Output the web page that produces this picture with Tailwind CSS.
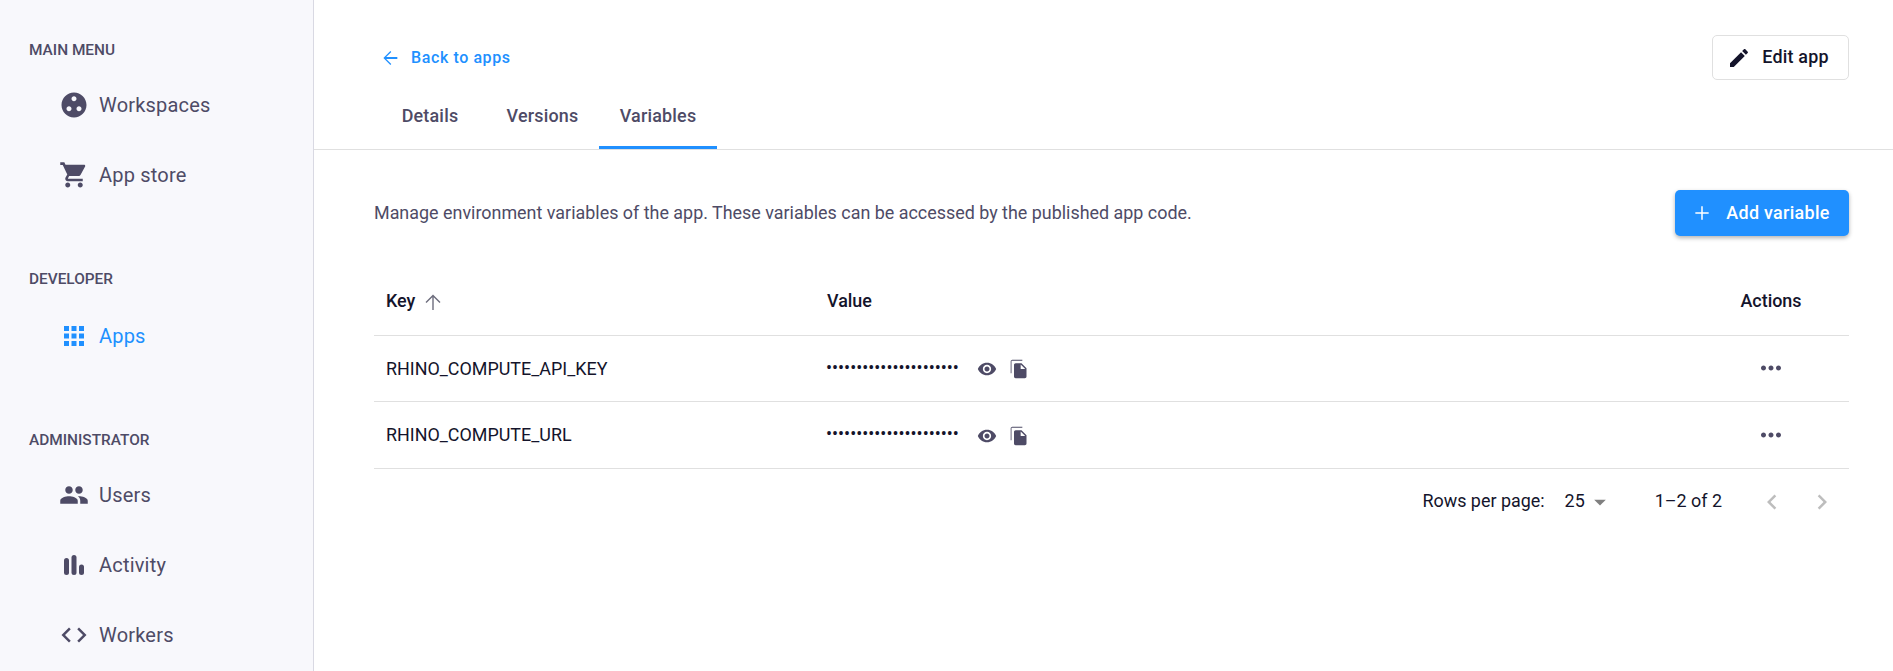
<!DOCTYPE html>
<html><head><meta charset="utf-8"><script src="https://cdn.jsdelivr.net/npm/@tailwindcss/browser@4"></script></head>
<body class="bg-white overflow-hidden font-['Roboto',sans-serif]">
<div class="flex h-[671px] w-[1893px] overflow-hidden">
<aside class="w-[314px] shrink-0 h-full bg-[#f8f8fc] border-r border-[#d9d9e3] pt-[39px] pl-[29px] text-[#4e4b66]">
  <div class="h-6 flex items-center text-[15.4px] font-medium">MAIN MENU</div>
  <nav class="mt-[7px] flex flex-col">
    <a class="h-[70px] flex items-center gap-[10px] pl-[30px] text-[20px] tracking-[0.2px]"><svg class="w-[30px] h-[30px] shrink-0" viewBox="0 0 24 24" fill="currentColor"><path d="M12 2C6.48 2 2 6.48 2 12s4.48 10 10 10 10-4.48 10-10S17.52 2 12 2zM8 17c-1.1 0-2-.9-2-2s.9-2 2-2 2 .9 2 2-.9 2-2 2zm4-8c-1.1 0-2-.9-2-2s.9-2 2-2 2 .9 2 2-.9 2-2 2zm4 8c-1.1 0-2-.9-2-2s.9-2 2-2 2 .9 2 2-.9 2-2 2z"/></svg>Workspaces</a>
    <a class="h-[70px] flex items-center gap-[10px] pl-[30px] text-[20px] tracking-[0.2px]"><svg class="w-[30px] h-[30px] shrink-0" viewBox="0 0 24 24" fill="currentColor"><path d="M7 18c-1.1 0-1.99.9-1.99 2S5.9 22 7 22s2-.9 2-2-.9-2-2-2zM1 2v2h2l3.6 7.59-1.35 2.45c-.16.28-.25.61-.25.96 0 1.1.9 2 2 2h12v-2H7.42c-.14 0-.25-.11-.25-.25l.03-.12.9-1.83h7.45c.75 0 1.41-.41 1.75-1.03l3.58-6.49c.08-.14.12-.31.12-.48 0-.55-.45-1-1-1H5.21l-.94-2H1zm16 16c-1.1 0-1.99.9-1.99 2s.89 2 1.99 2 2-.9 2-2-.9-2-2-2z"/></svg>App store</a>
  </nav>
  <div class="mt-[58px] h-6 flex items-center text-[15.4px] font-medium">DEVELOPER</div>
  <nav class="mt-[9px] flex flex-col">
    <a class="h-[70px] flex items-center gap-[10px] pl-[30px] text-[20px] tracking-[0.2px] text-[#2090ff]"><svg class="w-[30px] h-[30px] shrink-0" viewBox="0 0 24 24" fill="currentColor"><path d="M4 8h4V4H4v4zm6 12h4v-4h-4v4zm-6 0h4v-4H4v4zm0-6h4v-4H4v4zm6 0h4v-4h-4v4zm6-10v4h4V4h-4zm-6 4h4V4h-4v4zm6 6h4v-4h-4v4zm0 6h4v-4h-4v4z"/></svg>Apps</a>
  </nav>
  <div class="mt-[58px] h-6 flex items-center text-[15.4px] font-medium">ADMINISTRATOR</div>
  <nav class="mt-[7px] flex flex-col">
    <a class="h-[70px] flex items-center gap-[10px] pl-[30px] text-[20px] tracking-[0.2px]"><svg class="w-[30px] h-[30px] shrink-0" viewBox="0 0 24 24" fill="currentColor"><path d="M16 11c1.66 0 2.99-1.34 2.99-3S17.66 5 16 5c-1.66 0-3 1.34-3 3s1.34 3 3 3zm-8 0c1.66 0 2.99-1.34 2.99-3S9.66 5 8 5C6.34 5 5 6.34 5 8s1.34 3 3 3zm0 2c-2.33 0-7 1.17-7 3.5V19h14v-2.5c0-2.33-4.67-3.5-7-3.5zm8 0c-.29 0-.62.02-.97.05 1.16.84 1.97 1.97 1.97 3.45V19h6v-2.5c0-2.33-4.67-3.5-7-3.5z"/></svg>Users</a>
    <a class="h-[70px] flex items-center gap-[10px] pl-[30px] text-[20px] tracking-[0.2px]"><svg class="w-[30px] h-[30px] shrink-0" viewBox="0 0 30 30" fill="currentColor"><rect x="5" y="8" width="5" height="17" rx="2.5"/><rect x="12.500" y="5" width="5" height="20" rx="2.5"/><rect x="20" y="14.500" width="5" height="10.500" rx="2.5"/></svg>Activity</a>
    <a class="h-[70px] flex items-center gap-[10px] pl-[30px] text-[20px] tracking-[0.2px]"><svg class="w-[30px] h-[30px] shrink-0" viewBox="0 0 24 24" fill="currentColor"><path d="M9.4 16.6L4.8 12l4.6-4.6L8 6l-6 6 6 6 1.4-1.4zm5.2 0l4.6-4.6-4.6-4.6L16 6l6 6-6 6-1.4-1.4z"/></svg>Workers</a>
  </nav>
</aside>
<main class="flex-1 min-w-0">
  <header class="h-[150px] border-b border-[#e0e0e0] flex flex-col">
    <div class="flex justify-between items-start pl-[65px] pr-[44px] pt-[35px] h-[90px]">
      <a class="flex items-center gap-[10px] h-[46px] text-[#2090ff] text-[16px] font-medium tracking-[0.6px]"><svg class="w-[22px] h-[22px]" viewBox="0 0 24 24" fill="currentColor"><path d="M20 11H7.830l5.590-5.590L12.400 4.400 4.800 12l7.600 7.600 1.020-1.010L7.830 13H20z"/></svg>Back to apps</a>
      <button class="w-[137px] h-[45px] rounded-[5px] border border-[#e0e0e0] bg-white flex items-center justify-center gap-[11px] text-[#14142b] text-[17.92px] font-medium tracking-[0.2px] pr-[5px]"><svg class="w-[24px] h-[24px]" viewBox="0 0 24 24" fill="currentColor"><path d="M3 17.25V21h3.75L17.81 9.94l-3.75-3.75L3 17.25zM20.71 7.04c.39-.39.39-1.02 0-1.41l-2.34-2.34c-.39-.39-1.02-.39-1.41 0l-1.83 1.83 3.75 3.75 1.83-1.83z"/></svg>Edit app</button>
    </div>
    <div class="flex pl-[67px] h-[59px] text-[17.92px] font-medium tracking-[0.2px] text-[#4e4b66]">
      <div class="w-[98px] flex items-center justify-center mr-[7px] pb-[6px]">Details</div>
      <div class="w-[113px] flex items-center justify-center pb-[6px]">Versions</div>
      <div class="w-[118px] flex items-center justify-center border-b-[3px] border-[#2090ff]"><span class="mb-[3px]">Variables</span></div>
    </div>
  </header>
  <section class="pl-[60px] pr-[44px]">
    <div class="flex items-center justify-between pt-[40px] h-[86px]">
      <p class="text-[17.92px] text-[#4e4b66]">Manage environment variables of the app. These variables can be accessed by the published app code.</p>
      <button class="w-[174px] h-[46px] rounded-[5px] bg-[#2090ff] text-white text-[17.92px] font-medium tracking-[0.3px] flex items-center justify-center gap-[14px] pr-[2px] shadow-[0_2px_4px_rgba(0,0,0,0.3)]"><svg class="w-[20px] h-[20px]" viewBox="0 0 24 24" fill="none" stroke="currentColor" stroke-width="1.8"><path d="M12 4v16M4 12h16"/></svg>Add variable</button>
    </div>
    <table class="w-full border-collapse text-[17.92px] text-[#14142b] mt-[-1px]">
      <thead>
        <tr class="h-[100px] border-b border-[#e0e0e0] font-medium"><th class="w-[441px] pl-[12px] pt-[34px] text-left font-medium"><span class="inline-flex items-center gap-[6px]">Key<svg class="w-[24px] h-[24px] text-[#6e6e7e]" viewBox="0 0 24 24" fill="currentColor"><path d="M4.5 12l1 1L11.300 7.200V20h1.400V7.200l5.800 5.800 1-1L12 4.500z"/></svg></span></th><th class="pl-[12px] pt-[34px] text-left font-medium">Value</th><th class="w-[156px] pt-[34px] text-center font-medium">Actions</th></tr>
      </thead>
      <tbody>
        <tr class="h-[66px] border-b border-[#e0e0e0]"><td class="pl-[12px] pt-[2px]">RHINO_COMPUTE_API_KEY</td><td class="pl-[12px]"><div class="flex items-center"><span class="w-[150px] -ml-px mr-px">••••••••••••••••••••••</span><svg class="w-[20px] h-[20px] mt-[2px] text-[#4e4b66]" viewBox="0 0 24 24" fill="currentColor"><path d="M12 4.500C7 4.500 2.730 7.610 1 12c1.730 4.390 6 7.500 11 7.500s9.270-3.110 11-7.500c-1.730-4.390-6-7.500-11-7.500zM12 17c-2.760 0-5-2.240-5-5s2.240-5 5-5 5 2.240 5 5-2.240 5-5 5zm0-8c-1.660 0-3 1.340-3 3s1.340 3 3 3 3-1.340 3-3-1.340-3-3-3z"/></svg><svg class="w-[20px] h-[20px] mt-[2px] ml-[12px] text-[#4e4b66]" viewBox="0 0 24 24" fill="currentColor"><path d="M16 1H4c-1.100 0-2 .9-2 2v14h1V2h13V1zm-1 4l6 6v10c0 1.100-.9 2-2 2H7.990C6.890 23 6 22.100 6 21l.01-14c0-1.100.89-2 1.990-2h7zm-1 7h5.500L14 6.500V12z"/></svg></div></td><td class="text-center"><svg class="inline align-middle w-[30px] h-[30px] text-[#4e4b66]" viewBox="0 0 24 24" fill="currentColor"><path d="M6 10c-1.100 0-2 .9-2 2s.9 2 2 2 2-.9 2-2-.9-2-2-2zm12 0c-1.100 0-2 .9-2 2s.9 2 2 2 2-.9 2-2-.9-2-2-2zm-6 0c-1.100 0-2 .9-2 2s.9 2 2 2 2-.9 2-2-.9-2-2-2z"/></svg></td></tr>
        <tr class="h-[67px] border-b border-[#e0e0e0]"><td class="pl-[12px] pt-[2px]">RHINO_COMPUTE_URL</td><td class="pl-[12px]"><div class="flex items-center"><span class="w-[150px] -ml-px mr-px">••••••••••••••••••••••</span><svg class="w-[20px] h-[20px] mt-[2px] text-[#4e4b66]" viewBox="0 0 24 24" fill="currentColor"><path d="M12 4.500C7 4.500 2.730 7.610 1 12c1.730 4.390 6 7.500 11 7.500s9.270-3.110 11-7.500c-1.730-4.390-6-7.500-11-7.500zM12 17c-2.760 0-5-2.240-5-5s2.240-5 5-5 5 2.240 5 5-2.240 5-5 5zm0-8c-1.660 0-3 1.340-3 3s1.340 3 3 3 3-1.340 3-3-1.340-3-3-3z"/></svg><svg class="w-[20px] h-[20px] mt-[2px] ml-[12px] text-[#4e4b66]" viewBox="0 0 24 24" fill="currentColor"><path d="M16 1H4c-1.100 0-2 .9-2 2v14h1V2h13V1zm-1 4l6 6v10c0 1.100-.9 2-2 2H7.990C6.890 23 6 22.100 6 21l.01-14c0-1.100.89-2 1.990-2h7zm-1 7h5.500L14 6.500V12z"/></svg></div></td><td class="text-center"><svg class="inline align-middle w-[30px] h-[30px] text-[#4e4b66]" viewBox="0 0 24 24" fill="currentColor"><path d="M6 10c-1.100 0-2 .9-2 2s.9 2 2 2 2-.9 2-2-.9-2-2-2zm12 0c-1.100 0-2 .9-2 2s.9 2 2 2 2-.9 2-2-.9-2-2-2zm-6 0c-1.100 0-2 .9-2 2s.9 2 2 2 2-.9 2-2-.9-2-2-2z"/></svg></td></tr>
      </tbody>
    </table>
    <div class="flex items-center justify-end h-[66px] text-[17.92px] text-[#14142b] pr-[12px]">
      <span>Rows per page:</span>
      <span class="ml-[20px]">25</span>
      <svg class="w-[28px] h-[28px] text-[#808080] ml-[1px]" viewBox="0 0 24 24" fill="currentColor"><path d="M7 10l5 5 5-5z"/></svg>
      <span class="ml-[41px]">1–2 of 2</span>
      <svg class="w-[30px] h-[30px] ml-[35px] text-[#bdbdbd]" viewBox="0 0 24 24" fill="currentColor"><path d="M15.410 7.410L14 6l-6 6 6 6 1.410-1.410L10.830 12z"/></svg>
      <svg class="w-[30px] h-[30px] ml-[20px] text-[#bdbdbd]" viewBox="0 0 24 24" fill="currentColor"><path d="M8.590 16.590L10 18l6-6-6-6-1.410 1.410L13.170 12z"/></svg>
    </div>
  </section>
</main>
</div>
</body></html>
